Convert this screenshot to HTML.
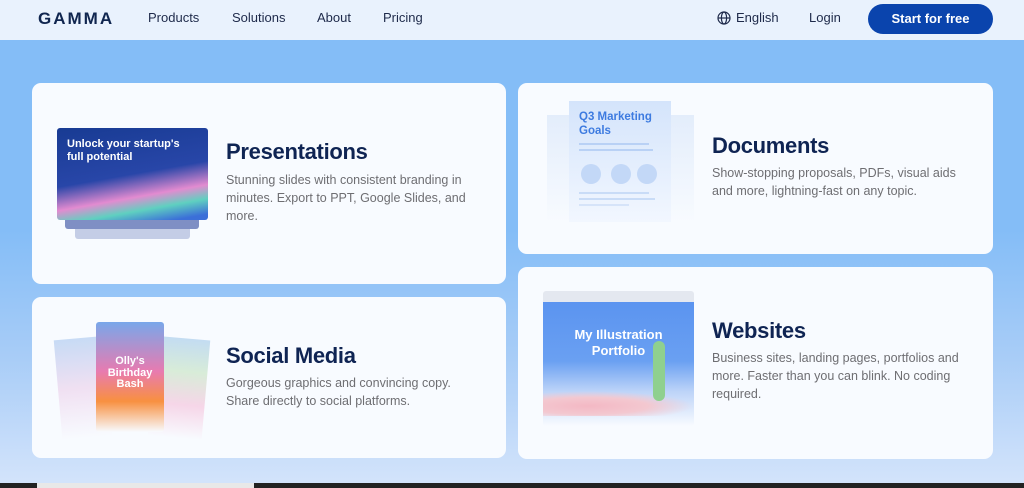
<!DOCTYPE html>
<html><head><meta charset="utf-8"><style>
*{margin:0;padding:0;box-sizing:border-box}
body{width:1024px;height:488px;overflow:hidden;font-family:"Liberation Sans",sans-serif;background:linear-gradient(#84bdf7 0px,#84bdf7 230px,#a9cdf7 360px,#d2e3fb 480px);position:relative}
.nav{position:absolute;top:0;left:0;width:1024px;height:40px;background:#e9f2fd}
.nav span{position:absolute;top:10px;font-size:13px;color:#1e2a4a}
.logo{position:absolute;left:38px;top:9px;font-size:17px;font-weight:bold;color:#10264f;letter-spacing:2px}
.btn{position:absolute;left:868px;top:4px;width:125px;height:30px;border-radius:15px;background:#0a44ad;color:#fff;font-size:13px;font-weight:bold;text-align:center;line-height:30px}
.card{position:absolute;background:#f8fbff;border-radius:9px}
h2{position:absolute;font-size:22px;color:#0f2453;font-weight:bold;letter-spacing:-.3px}
p{position:absolute;font-size:12.5px;line-height:18px;color:#6e6e72}
.bar{position:absolute;top:483px;left:0;width:1024px;height:5px;background:#222}
</style></head><body>
<div class="nav">
<div class="logo">GAMMA</div>
<span style="left:148px">Products</span>
<span style="left:232px">Solutions</span>
<span style="left:317px">About</span>
<span style="left:383px">Pricing</span>
<svg style="position:absolute;left:717px;top:11px" width="14" height="14" viewBox="0 0 14 14" fill="none" stroke="#1e2a4a" stroke-width="1.2"><circle cx="7" cy="7" r="6"/><ellipse cx="7" cy="7" rx="2.6" ry="6"/><path d="M1 7h12"/></svg>
<span style="left:736px">English</span>
<span style="left:809px">Login</span>
<div class="btn">Start for free</div>
</div>

<div class="card" style="left:32px;top:83px;width:474px;height:201px"></div>
<div style="position:absolute;left:75px;top:222px;width:115px;height:17px;background:#c4cde6;border-radius:3px"></div>
<div style="position:absolute;left:65px;top:214px;width:134px;height:15px;background:#7f8fc4;border-radius:3px"></div>
<div style="position:absolute;left:57px;top:128px;width:151px;height:92px;border-radius:3px;background:linear-gradient(170deg,#183b93 0%,#2846a8 50%,#e28bd0 70%,#5fd0c0 82%,#3b6fd8 95%);overflow:hidden">
<div style="position:absolute;left:10px;top:10px;font-size:11px;font-weight:bold;color:#fff;line-height:13px">Unlock your startup's<br>full potential</div></div>
<h2 style="left:226px;top:139px">Presentations</h2>
<p style="left:226px;top:171px;width:260px">Stunning slides with consistent branding in minutes. Export to PPT, Google Slides, and more.</p>

<div class="card" style="left:518px;top:83px;width:475px;height:171px"></div>
<div style="position:absolute;left:547px;top:115px;width:147px;height:108px;background:linear-gradient(#e3edfb,#f8fbff)"></div>
<div style="position:absolute;left:569px;top:101px;width:102px;height:121px;background:linear-gradient(#d4e4fb,#f2f7ff)">
<div style="position:absolute;left:10px;top:9px;font-size:11.5px;font-weight:bold;color:#3d7be0;line-height:14px">Q3 Marketing<br>Goals</div>
<div style="position:absolute;left:10px;top:42px;width:70px;height:2px;background:#b9d1f5"></div>
<div style="position:absolute;left:10px;top:48px;width:74px;height:2px;background:#b9d1f5"></div>
<div style="position:absolute;left:12px;top:63px;width:20px;height:20px;border-radius:50%;background:#c3d8f7"></div>
<div style="position:absolute;left:42px;top:63px;width:20px;height:20px;border-radius:50%;background:#c3d8f7"></div>
<div style="position:absolute;left:68px;top:63px;width:20px;height:20px;border-radius:50%;background:#c3d8f7"></div>
<div style="position:absolute;left:10px;top:91px;width:70px;height:2px;background:#c9dcf7"></div>
<div style="position:absolute;left:10px;top:97px;width:76px;height:2px;background:#c9dcf7"></div>
<div style="position:absolute;left:10px;top:103px;width:50px;height:2px;background:#d6e4f9"></div>
</div>
<h2 style="left:712px;top:133px">Documents</h2>
<p style="left:712px;top:164px;width:250px">Show-stopping proposals, PDFs, visual aids and more, lightning-fast on any topic.</p>

<div class="card" style="left:32px;top:297px;width:474px;height:161px"></div>
<div style="position:absolute;left:58px;top:338px;width:50px;height:100px;background:linear-gradient(#c7dbf5,#f0e0f2,#f8fbff);transform:rotate(-5deg)"></div>
<div style="position:absolute;left:152px;top:338px;width:54px;height:100px;background:linear-gradient(#c3dcf2,#d8ecd8,#f6d6e8,#f8fbff);transform:rotate(5deg)"></div>
<div style="position:absolute;left:96px;top:322px;width:68px;height:110px;border-radius:3px;background:linear-gradient(#79a7ea,#e87bb0 45%,#f89040 72%,#f8fbff)">
<div style="position:absolute;left:0;width:68px;top:34px;text-align:center;font-size:11px;font-weight:bold;color:#fff;line-height:11.5px">Olly's<br>Birthday<br>Bash</div></div>
<h2 style="left:226px;top:343px">Social Media</h2>
<p style="left:226px;top:374px;width:260px">Gorgeous graphics and convincing copy. Share directly to social platforms.</p>

<div class="card" style="left:518px;top:267px;width:475px;height:192px"></div>
<div style="position:absolute;left:543px;top:291px;width:151px;height:135px;border-radius:3px;overflow:hidden;background:linear-gradient(#e4e8f0 0,#e4e8f0 11px,#5b94f0 11px,#6aa0f2 70px,#bcd3f8 100px,#f8fbff 135px)">
<div style="position:absolute;left:0;top:100px;width:151px;height:25px;background:radial-gradient(ellipse at 30% 60%,#f3b8c4 0,#f3c8d0 40%,transparent 70%)"></div>
<div style="position:absolute;left:110px;top:50px;width:12px;height:60px;border-radius:6px;background:#8fd08f"></div>
<div style="position:absolute;left:0;width:151px;top:36px;text-align:center;font-size:13px;font-weight:bold;color:#fff;line-height:16px">My Illustration<br>Portfolio</div></div>
<h2 style="left:712px;top:318px">Websites</h2>
<p style="left:712px;top:349px;width:270px">Business sites, landing pages, portfolios and more. Faster than you can blink. No coding required.</p>

<div class="bar"></div>
<div style="position:absolute;top:483px;left:37px;width:217px;height:5px;background:#e8e8e8"></div>
</body></html>
